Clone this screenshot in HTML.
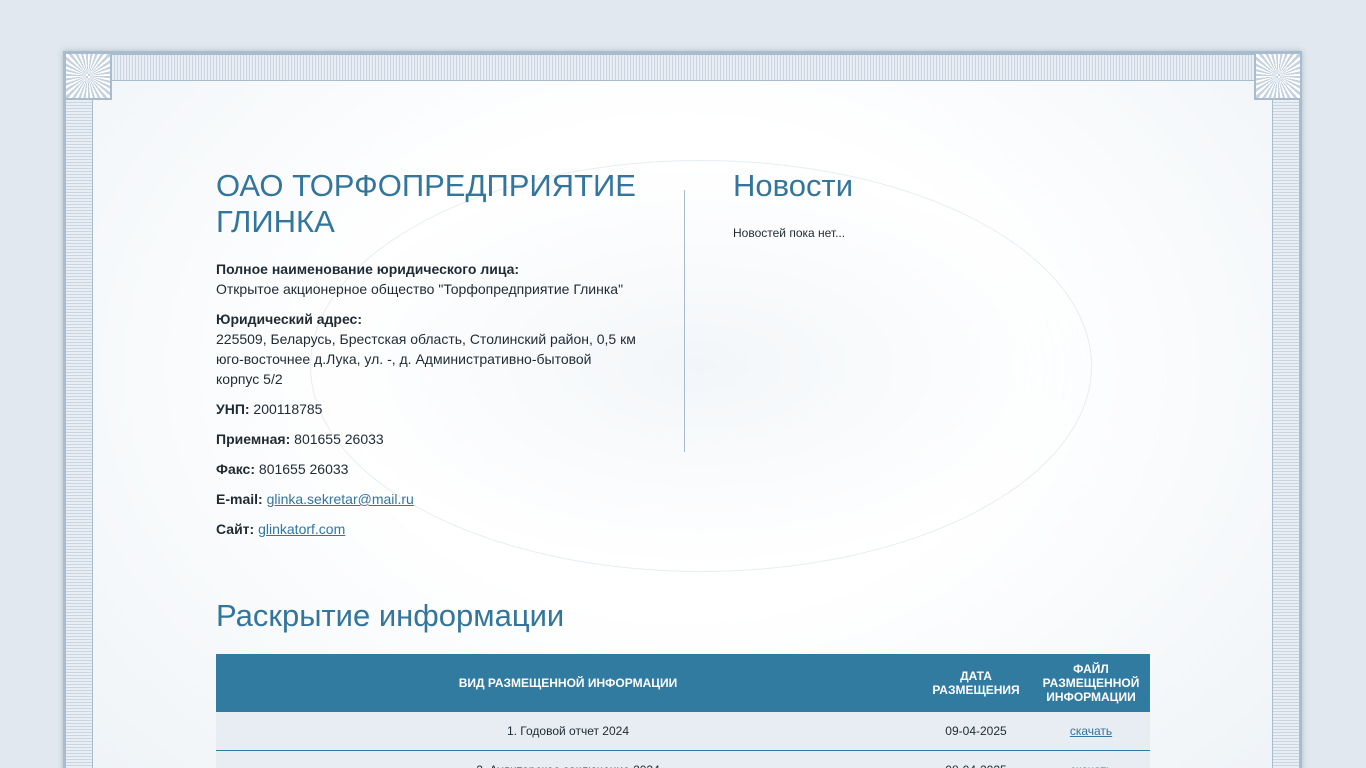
<!DOCTYPE html>
<html><head><meta charset="utf-8"><style>
html,body{margin:0;width:1366px;height:768px;overflow:hidden}
body{background:#e1e8ef;font-family:"Liberation Sans",sans-serif;position:relative}
.frame{position:absolute;left:63px;top:51px;width:1239px;height:740px;background:#a9bccd;box-shadow:0 0 6px rgba(100,120,140,.4)}
.band{position:absolute;background:repeating-linear-gradient(90deg,#c9d6e2 0 1px,#e8eef4 1px 3px)}
.bandv{position:absolute;background:repeating-linear-gradient(0deg,#c9d6e2 0 1px,#e8eef4 1px 3px)}
.inner{position:absolute;left:30px;top:30px;width:1179px;height:720px;background:radial-gradient(ellipse at 50% 40%,#fff 40%,#eef3f7 100%)}
.corner{position:absolute;width:44px;height:44px;background:repeating-conic-gradient(from 0deg at 50% 50%,#fff 0 6deg,#c4d2df 6deg 12deg);border:2px solid #a9bccd}
.c{position:absolute;color:#1f2a33;font-size:14px;line-height:20px}
h1,h2{font-weight:normal;color:#33759b;margin:0;position:absolute}
a{color:#33759b}
.ell{position:absolute;left:310px;top:160px;width:780px;height:410px;border-radius:50%;border:1px solid #e6edf3;background:radial-gradient(ellipse,rgba(220,230,238,.35),rgba(255,255,255,0) 70%)}
table{position:absolute;left:216px;top:654px;width:934px;border-collapse:collapse;font-size:12px}
th{background:#317aa0;color:#fff;font-weight:bold;height:58px;padding:0 4px}
td{background:#e7edf2;text-align:center;height:36px;border-bottom:1px solid #317aa0;color:#1f2a33}
</style></head><body>
<div class="frame">
<div class="band" style="left:48px;top:4px;width:1143px;height:25px"></div>
<div class="bandv" style="left:3px;top:48px;width:26px;height:700px"></div>
<div class="bandv" style="left:1210px;top:48px;width:26px;height:700px"></div>
<div class="inner"></div>
<div class="corner" style="left:1px;top:1px"></div>
<div class="corner" style="left:1191px;top:1px"></div>
</div>
<div class="ell"></div>
<div style="position:absolute;left:684px;top:190px;width:1px;height:262px;background:#a9bccd"></div>
<h1 style="left:216px;top:168px;font-size:31px;line-height:36px;width:440px">ОАО ТОРФОПРЕДПРИЯТИЕ ГЛИНКА</h1>
<div class="c" style="left:216px;top:259px;width:420px">
<b>Полное наименование юридического лица:</b><br>Открытое акционерное общество "Торфопредприятие Глинка"
<div style="height:10px"></div><b>Юридический адрес:</b><br>225509, Беларусь, Брестская область, Столинский район, 0,5 км юго-восточнее д.Лука, ул. -, д. Административно-бытовой корпус 5/2
<div style="height:10px"></div><b>УНП:</b> 200118785
<div style="height:10px"></div><b>Приемная:</b> 801655 26033
<div style="height:10px"></div><b>Факс:</b> 801655 26033
<div style="height:10px"></div><b>E-mail:</b> <a href="#">glinka.sekretar@mail.ru</a>
<div style="height:10px"></div><b>Сайт:</b> <a href="#">glinkatorf.com</a>
</div>
<h1 style="left:733px;top:168px;font-size:31px;line-height:36px">Новости</h1>
<div class="c" style="left:733px;top:223px;font-size:12px">Новостей пока нет...</div>
<h2 style="left:216px;top:597px;font-size:31px;line-height:38px">Раскрытие информации</h2>
<table>
<tr><th>ВИД РАЗМЕЩЕННОЙ ИНФОРМАЦИИ</th><th style="width:104px">ДАТА<br>РАЗМЕЩЕНИЯ</th><th style="width:110px">ФАЙЛ<br>РАЗМЕЩЕННОЙ<br>ИНФОРМАЦИИ</th></tr>
<tr><td>1. Годовой отчет 2024</td><td>09-04-2025</td><td><a href="#">скачать</a></td></tr>
<tr><td>2. Аудиторское заключение 2024</td><td>08-04-2025</td><td><a href="#">скачать</a></td></tr>
</table>
</body></html>
